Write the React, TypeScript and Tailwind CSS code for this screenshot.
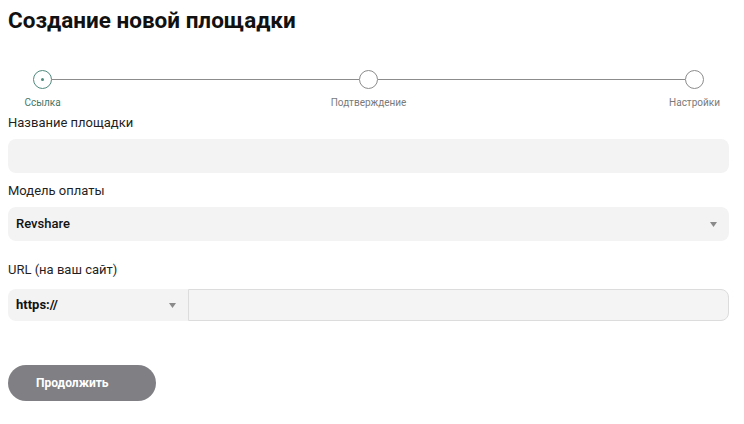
import React from 'react';

const steps = ['Ссылка', 'Подтверждение', 'Настройки'];

function Arrow() {
  return (
    <svg width="7" height="5" viewBox="0 0 7 5" className="shrink-0">
      <path d="M0 0h7L3.5 5z" fill="#8a8a8a" />
    </svg>
  );
}

function Stepper() {
  return (
    <div className="mt-[37px] px-[25px]">
      <div className="flex items-center">
        {steps.map((s, i) => (
          <React.Fragment key={s}>
            {i === 0 ? (
              <div className="w-[19px] h-[19px] rounded-full border border-[#4f8a7c] flex items-center justify-center shrink-0">
                <div className="w-[3px] h-[3px] rounded-full bg-[#4f8a7c]" />
              </div>
            ) : (
              <div className="w-[19px] h-[19px] rounded-full border border-[#8c8c8c] bg-white shrink-0" />
            )}
            {i < steps.length - 1 && <div className="flex-1 h-px bg-[#8c8c8c]" />}
          </React.Fragment>
        ))}
      </div>
      <div className="flex items-center mt-[7px]">
        {steps.map((s, i) => (
          <React.Fragment key={s}>
            <div className="w-[19px] flex justify-center shrink-0">
              <span
                className={
                  'whitespace-nowrap text-[10px] leading-[14px] ' +
                  (i === 0 ? 'text-[#3f7668]' : 'text-[#7a7a7a]')
                }
              >
                {s}
              </span>
            </div>
            {i < steps.length - 1 && <div className="flex-1" />}
          </React.Fragment>
        ))}
      </div>
    </div>
  );
}

function Label({ children }: { children: React.ReactNode }) {
  return <div className="text-[13px] leading-[16px] text-[#1f1f1f]">{children}</div>;
}

export default function App() {
  return (
    <div className="w-[744px] h-[424px] bg-white pl-[8px] pr-[15px] font-['Roboto',sans-serif]">
      <h1 className="pt-[7px] text-[22.5px] leading-[26px] font-bold text-[#111]">Создание новой площадки</h1>

      <Stepper />

      <div className="mt-[5px]">
        <Label>Название площадки</Label>
        <div className="mt-[8px] h-[34px] rounded-[8px] bg-[#f3f3f3]" />
      </div>

      <div className="mt-[10px]">
        <Label>Модель оплаты</Label>
        <div className="mt-[8px] h-[34px] rounded-[8px] bg-[#f3f3f3] flex items-center justify-between pl-[8px] pr-[12px]">
          <span className="text-[13px] font-medium text-[#111]">Revshare</span>
          <Arrow />
        </div>
      </div>

      <div className="mt-[21px]">
        <Label>URL (на ваш сайт)</Label>
        <div className="mt-[11px] h-[32px] flex">
          <div className="w-[180px] rounded-l-[8px] bg-[#f3f3f3] flex items-center justify-between pl-[8px] pr-[12px]">
            <span className="text-[13px] font-bold text-[#111]">https://</span>
            <Arrow />
          </div>
          <div className="flex-1 rounded-r-[8px] bg-[#f4f4f4] border border-[#dcdcdc]" />
        </div>
      </div>

      <button className="mt-[44px] w-[148px] h-[36px] rounded-full bg-[#808084] text-white text-[12px] font-bold text-left pl-[28px]">
        Продолжить
      </button>
    </div>
  );
}
